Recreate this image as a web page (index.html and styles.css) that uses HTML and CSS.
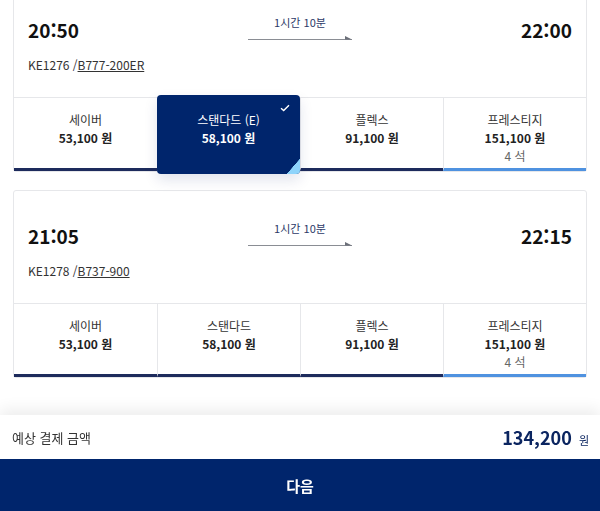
FILE: index.html
```html
<!doctype html>

<html lang="ko">
  <head>
    <meta charset="utf-8"/>
    <title>항공편 선택</title>
    <meta name="viewport" content="width=device-width,initial-scale=1.0"/>
    <link rel="stylesheet" href="styles.css">
  </head>
  <body>
    <ul class="flights">
      <li class="flight">
        <div class="flight__times">
          <span class="flight__time">20:50</span>
          <div class="flight__duration">
            <span class="flight__duration-text">1시간 10분</span>
            <svg class="flight__arrow" width="104" height="6" viewBox="0 0 104 6">
              <path d="M0 5.5H104" stroke="#8a8d94" stroke-width="1.2"/>
              <path d="M97 2L104 5.5H97Z" fill="#6b6f78"/>
            </svg>
          </div>
          <span class="flight__time">22:00</span>
        </div>
        <p class="flight__info">KE1276 /<a class="flight__aircraft">B777-200ER</a></p>
        <ul class="fares">
          <li class="fare">
            <span class="fare__name">세이버</span>
            <span class="fare__price">53,100 원</span>
          </li>
          <li class="fare fare_selected">
            <svg class="fare__check" width="10" height="8" viewBox="0 0 10 8">
              <path d="M1 4.2L3.7 6.6L9 1.2" fill="none" stroke="#fff" stroke-width="1.4"/>
            </svg>
            <span class="fare__name">스탠다드 (E)</span>
            <span class="fare__price">58,100 원</span>
          </li>
          <li class="fare">
            <span class="fare__name">플렉스</span>
            <span class="fare__price">91,100 원</span>
          </li>
          <li class="fare fare_prestige">
            <span class="fare__name">프레스티지</span>
            <span class="fare__price">151,100 원</span>
            <span class="fare__seats">4 석</span>
          </li>
        </ul>
      </li>

      <li class="flight">
        <div class="flight__times">
          <span class="flight__time">21:05</span>
          <div class="flight__duration">
            <span class="flight__duration-text">1시간 10분</span>
            <svg class="flight__arrow" width="104" height="6" viewBox="0 0 104 6">
              <path d="M0 5.5H104" stroke="#8a8d94" stroke-width="1.2"/>
              <path d="M97 2L104 5.5H97Z" fill="#6b6f78"/>
            </svg>
          </div>
          <span class="flight__time">22:15</span>
        </div>
        <p class="flight__info">KE1278 /<a class="flight__aircraft">B737-900</a></p>
        <ul class="fares">
          <li class="fare">
            <span class="fare__name">세이버</span>
            <span class="fare__price">53,100 원</span>
          </li>
          <li class="fare">
            <span class="fare__name">스탠다드</span>
            <span class="fare__price">58,100 원</span>
          </li>
          <li class="fare">
            <span class="fare__name">플렉스</span>
            <span class="fare__price">91,100 원</span>
          </li>
          <li class="fare fare_prestige">
            <span class="fare__name">프레스티지</span>
            <span class="fare__price">151,100 원</span>
            <span class="fare__seats">4 석</span>
          </li>
        </ul>
      </li>
    </ul>

    <div class="summary">
      <div class="summary__total">
        <span class="summary__label">예상 결제 금액</span>
        <span class="summary__amount">134,200 <small class="summary__unit">원</small></span>
      </div>
      <button class="summary__next">다음</button>
    </div>
  </body>
</html>
```

FILE: styles.css
```css
body {
  font-family: "Noto Sans CJK KR", "Noto Sans", sans-serif;
  font-size: 12px;
  color: #222;
  background-color: #fff;
  margin: 0;
  overflow: hidden;
}
.flights {
  list-style: none;
  margin: -16px 0 0;
  padding: 0 13px;
  display: flex;
  flex-direction: column;
  gap: 18px;
}
.flight {
  border: 1px solid #e6e7ea;
  border-radius: 3px;
  background-color: #fff;
}
.flight__times {
  display: flex;
  justify-content: space-between;
  align-items: flex-start;
  padding: 31px 14px 0;
}
.flight__time {
  font-size: 19px;
  font-weight: 700;
  line-height: 28px;
  color: #111;
}
.flight__duration {
  display: flex;
  flex-direction: column;
  align-items: center;
  margin-top: -2px;
  gap: 4px;
}
.flight__duration-text {
  font-size: 11px;
  line-height: 16px;
  color: #2c3a68;
}
.flight__arrow {
  display: block;
}
.flight__info {
  margin: 12px 0 0;
  padding: 0 14px 23px;
  font-size: 12px;
  line-height: 18px;
  color: #333;
}
.flight__aircraft {
  color: #333;
  text-decoration: underline;
}
.fares {
  list-style: none;
  margin: 0;
  padding: 0;
  display: grid;
  grid-template-columns: repeat(4, 1fr);
  border-top: 1px solid #e6e7ea;
}
.fare {
  position: relative;
  display: flex;
  flex-direction: column;
  align-items: center;
  height: 73px;
  padding-top: 13px;
  box-sizing: border-box;
  border-left: 1px solid #e6e7ea;
  border-bottom: 3px solid #1d2b5c;
  line-height: 18px;
}
.fare:first-child {
  border-left: none;
}
.fare__name {
  color: #333;
}
.fare__price {
  font-weight: 700;
  color: #222;
}
.fare__seats {
  color: #666;
}
.fare_prestige {
  border-bottom-color: #4f92e0;
}
.fare_selected {
  margin: -3px 0 -3px;
  height: 79px;
  padding-top: 16px;
  border: none;
  border-radius: 4px;
  background-color: #00256c;
  box-shadow: 0 6px 14px rgba(0, 37, 108, 0.12);
  z-index: 1;
  overflow: hidden;
}
.fare_selected .fare__name,
.fare_selected .fare__price {
  color: #fff;
}
.fare_selected::after {
  content: "";
  position: absolute;
  right: 0;
  bottom: 0;
  width: 13px;
  height: 15px;
  background: linear-gradient(to top left, #8ed4fb 50%, transparent 52%);
}
.fare__check {
  position: absolute;
  top: 9px;
  right: 10px;
}
.summary {
  position: fixed;
  left: 0;
  right: 0;
  bottom: 0;
  background-color: #fff;
  box-shadow: 0 -6px 14px rgba(0, 0, 0, 0.07);
}
.summary__total {
  display: flex;
  justify-content: space-between;
  align-items: center;
  height: 44px;
  padding: 0 11px 0 12px;
}
.summary__label {
  font-size: 13px;
  color: #333;
}
.summary__amount {
  font-size: 18px;
  font-weight: 700;
  color: #0b2560;
}
.summary__unit {
  font-size: 11px;
  font-weight: 400;
  margin-left: 2px;
}
.summary__next {
  display: block;
  width: 100%;
  height: 52px;
  border: none;
  background-color: #00256c;
  color: #fff;
  font-family: inherit;
  font-size: 15px;
  font-weight: 700;
}
```
